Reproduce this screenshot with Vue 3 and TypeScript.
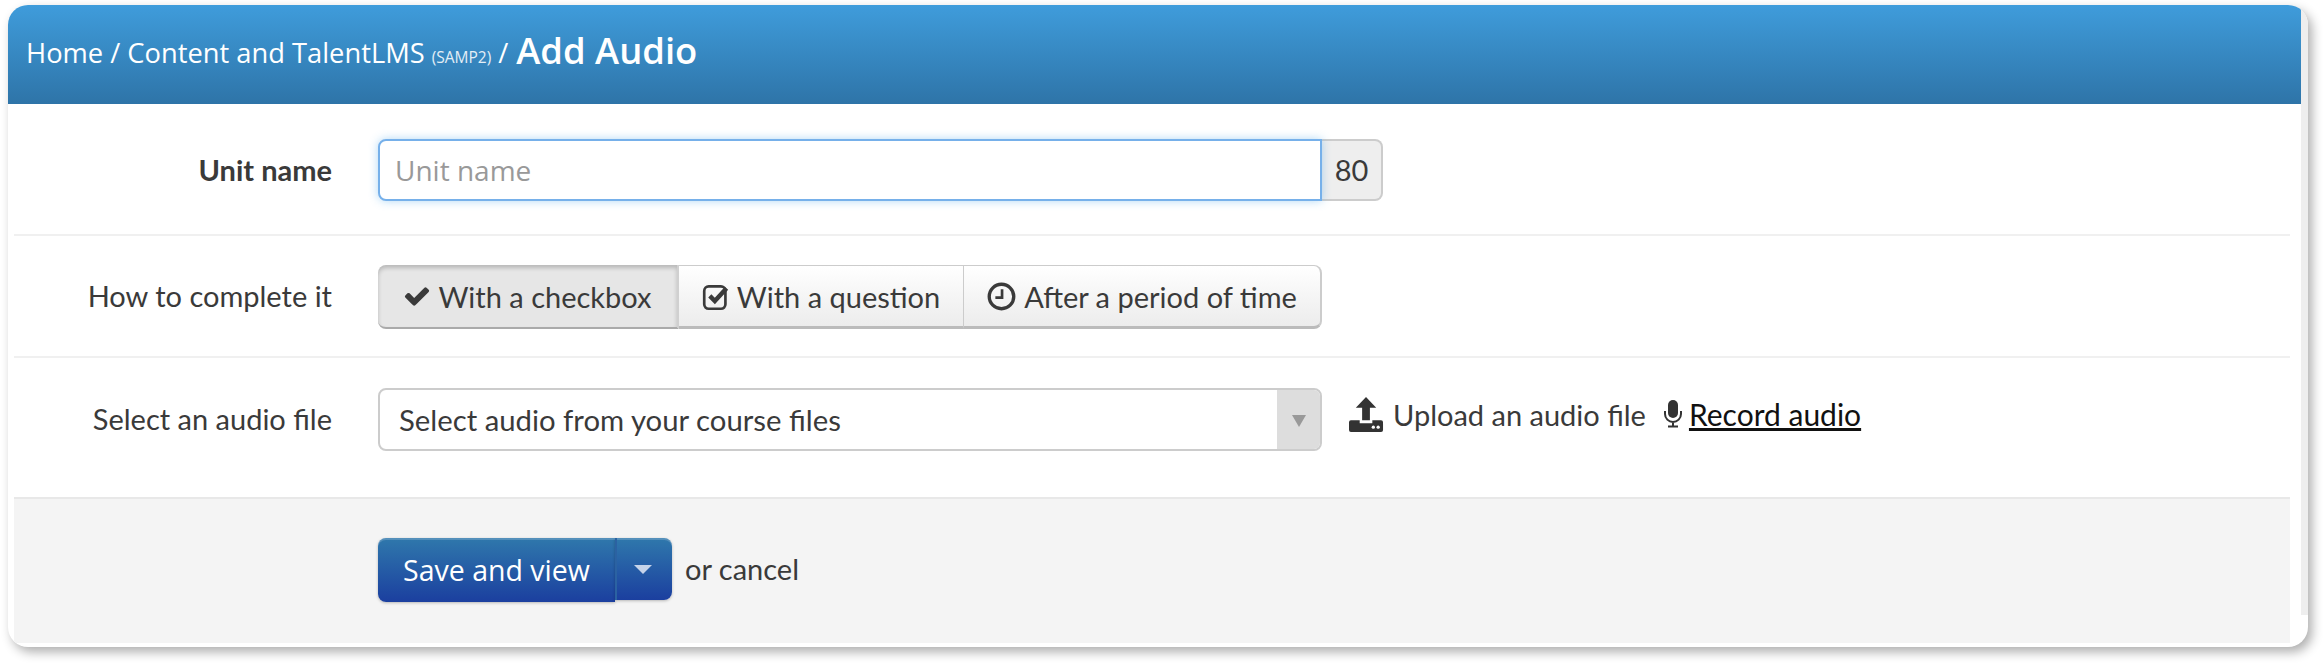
<template>
  <div class="page">
    <div class="card">
      <div class="card-main">
        <div class="header">
          <span>Home / Content and TalentLMS</span>
          <small>(SAMP2)</small>
          <span>/</span>
          <strong>Add Audio</strong>
        </div>

        <div class="rows">
          <div class="row row-name">
            <label class="label label-bold">Unit name</label>
            <div class="input-group">
              <input class="name-input" type="text" placeholder="Unit name" />
              <span class="addon">80</span>
            </div>
          </div>

          <div class="row row-complete">
            <label class="label">How to complete it</label>
            <div class="segments">
              <button class="seg seg-active">
                <svg class="ico" viewBox="0 0 1792 1792" width="28" height="28">
                  <path fill="currentColor" d="M1671 566q0 40-28 68l-724 724-136 136q-28 28-68 28t-68-28l-136-136-362-362q-28-28-28-68t28-68l136-136q28-28 68-28t68 28l294 295 656-657q28-28 68-28t68 28l136 136q28 28 28 68z" />
                </svg>
                With a checkbox
              </button>
              <button class="seg seg-2">
                <svg class="ico" viewBox="0 0 26 26" width="29" height="29">
                  <rect x="2" y="4" width="19" height="20" rx="4" fill="none" stroke="currentColor" stroke-width="2.400" />
                  <path d="M7 12.500l4.500 4.500L22 5.500" fill="none" stroke="currentColor" stroke-width="4" />
                </svg>
                With a question
              </button>
              <button class="seg seg-3">
                <svg class="ico" viewBox="0 0 26 26" width="29" height="29">
                  <circle cx="13" cy="13" r="11" fill="none" stroke="currentColor" stroke-width="3" />
                  <path d="M13.500 6.500v7.500h-6" fill="none" stroke="currentColor" stroke-width="2.400" />
                </svg>
                After a period of time
              </button>
            </div>
          </div>

          <div class="row row-audio">
            <label class="label">Select an audio file</label>
            <div class="select">
              <span class="select-text">Select audio from your course files</span>
              <span class="select-arrow"></span>
            </div>
            <div class="audio-actions">
              <span class="action">
                <svg class="upload" viewBox="0 0 36 36" width="35" height="35">
                  <path fill="#333" d="M17.500 0 28 11h-6.500v13h-8V11H7z" />
                  <path fill="#333" d="M0 26a2 2 0 0 1 2-2h9v3h13v-3h9a2 2 0 0 1 2 2v8a2 2 0 0 1-2 2H2a2 2 0 0 1-2-2z" />
                  <circle cx="25" cy="31" r="1.700" fill="#fff" />
                  <circle cx="30" cy="31" r="1.700" fill="#fff" />
                </svg>
                Upload an audio file
              </span>
              <a class="action record" href="#">
                <svg class="mic" viewBox="0 0 20 28" width="20" height="28">
                  <rect x="5" y="0" width="10" height="18" rx="5" fill="#333" />
                  <path d="M2 11v3a8 8 0 0 0 16 0v-3M10 22v4M5 26.500h10" fill="none" stroke="#333" stroke-width="2" />
                </svg>
                <span class="record-text">Record audio</span>
              </a>
            </div>
          </div>
        </div>

        <div class="footer">
          <div class="save-group">
            <button class="save">Save and view</button>
            <button class="caret"><i></i></button>
          </div>
          <span class="cancel">or cancel</span>
        </div>
      </div>
      <div class="card-strip"></div>
    </div>
  </div>
</template>

<script setup lang="ts">
</script>

<style>
html,
body {
  background: #fff;
}
</style>

<style scoped>
.page {
  width: 2324px;
  height: 667px;
  padding: 5px 16px 20px 8px;
  box-sizing: border-box;
  font-family: "Lato", sans-serif;
  color: #3a3a3a;
  overflow: hidden;
}

.card {
  display: flex;
  height: 642px;
  background: #fff;
  border-radius: 20px;
  box-shadow: 4px 5px 11px rgba(0, 0, 0, 0.32);
  overflow: hidden;
}

.card-main {
  width: 2293px;
  flex-shrink: 0;
}

.card-strip {
  flex: 1;
  height: 610px;
  background: #eeeeee;
}

.header {
  height: 99px;
  padding-left: 18px;
  box-sizing: border-box;
  display: flex;
  align-items: center;
  padding-bottom: 4px;
  gap: 7px;
  background: linear-gradient(#3f9cdb, #2e74a8);
  color: #fff;
  font-family: "Open Sans", sans-serif;
  font-size: 27.300px;
}

.header small {
  font-size: 15.500px;
  margin-top: 8px;
  color: #e3eef6;
}

.header strong {
  font-size: 36.400px;
  font-weight: 600;
  margin-top: -5px;
  margin-left: 1px;
}

.rows {
  padding: 0 11px 0 6px;
}

.row {
  display: flex;
  align-items: flex-start;
  border-bottom: 2px solid #f0f0f0;
  box-sizing: border-box;
}

.row-name {
  height: 132px;
  padding-top: 35px;
}

.row-complete {
  height: 122px;
  padding-top: 29px;
}

.row-audio {
  height: 141px;
  padding-top: 30px;
  border-bottom-color: #e8e8e8;
}

.label {
  width: 318px;
  margin-right: 46px;
  text-align: right;
  font-size: 29px;
  line-height: 62px;
  flex-shrink: 0;
}

.label-bold {
  font-weight: 700;
}

.input-group {
  display: flex;
  height: 62px;
}

.name-input {
  width: 944px;
  height: 62px;
  box-sizing: border-box;
  padding: 0 15px;
  border: 2px solid #76b0ea;
  border-radius: 8px 0 0 8px;
  box-shadow: 0 0 10px rgba(82, 168, 236, 0.45);
  font-family: "Open Sans", sans-serif;
  font-size: 28px;
  outline: none;
  position: relative;
}

.name-input::placeholder {
  color: #999;
}

.addon {
  width: 61px;
  box-sizing: border-box;
  background: #eee;
  border: 2px solid #ccc;
  border-left: 0;
  border-radius: 0 8px 8px 0;
  font-size: 29px;
  line-height: 58px;
  text-align: center;
}

.segments {
  display: flex;
  height: 64px;
}

.seg {
  display: flex;
  align-items: center;
  justify-content: center;
  gap: 6px;
  padding: 0;
  box-sizing: border-box;
  font-family: "Lato", sans-serif;
  font-size: 29px;
  color: #3a3a3a;
  background: linear-gradient(#fff, #ececec);
  border: 1px solid #ccc;
  border-left: 0;
  border-bottom: 3px solid #bbb;
}

.seg-active {
  width: 301px;
  gap: 7px;
  background: #e6e6e6;
  border: 0;
  border-right: 2px solid #d0d0d0;
  border-bottom: 2px solid #aaa;
  border-radius: 8px 0 0 8px;
  box-shadow: inset 0 3px 4px rgba(0, 0, 0, 0.2);
}

.seg-2 {
  width: 285px;
}

.seg-3 {
  width: 358px;
  gap: 8px;
  border-right: 2px solid #ccc;
  border-radius: 0 8px 8px 0;
}

.select {
  display: flex;
  width: 944px;
  height: 63px;
  box-sizing: border-box;
  border: 2px solid #ccc;
  border-radius: 8px;
  overflow: hidden;
}

.select-text {
  flex: 1;
  padding-left: 19px;
  font-size: 29.300px;
  line-height: 59px;
}

.select-arrow {
  position: relative;
  width: 43px;
  background: #ddd;
}

.select-arrow::after {
  content: "";
  position: absolute;
  left: 15px;
  top: 25px;
  border-left: 7px solid transparent;
  border-right: 7px solid transparent;
  border-top: 12px solid #999;
}

.audio-actions {
  display: flex;
  align-items: flex-start;
  margin-left: 27px;
  gap: 17px;
  padding-top: 8px;
  font-size: 29px;
}

.action {
  display: flex;
  align-items: center;
  gap: 9px;
  height: 36px;
}

.record {
  color: #111;
  text-decoration: none;
  gap: 6px;
  font-size: 30px;
}

.record-text {
  text-decoration: underline;
}

.footer {
  display: flex;
  align-items: flex-start;
  height: 144px;
  margin: 0 11px 0 6px;
  padding: 39px 0 0 364px;
  box-sizing: border-box;
  background: #f4f4f4;
}

.save-group {
  display: flex;
  align-items: flex-start;
}

.save,
.caret {
  border: 0;
  color: #fff;
  background: linear-gradient(#2f78ac, #1b3f9f);
  box-shadow: inset 0 2px 0 rgba(255, 255, 255, 0.18), 0 1px 3px rgba(0, 0, 0, 0.25);
}

.save {
  width: 237px;
  height: 64px;
  border-radius: 8px 0 0 8px;
  font-family: "Open Sans", sans-serif;
  font-size: 28.500px;
}

.caret {
  width: 57px;
  height: 62px;
  border-left: 2px solid #2b62a2;
  border-radius: 0 8px 8px 0;
  position: relative;
}

.caret i {
  position: absolute;
  left: 17px;
  top: 27px;
  border-left: 9px solid transparent;
  border-right: 9px solid transparent;
  border-top: 9px solid #c5d3ea;
}

.cancel {
  margin-left: 13px;
  font-size: 29px;
  line-height: 62px;
}
</style>
